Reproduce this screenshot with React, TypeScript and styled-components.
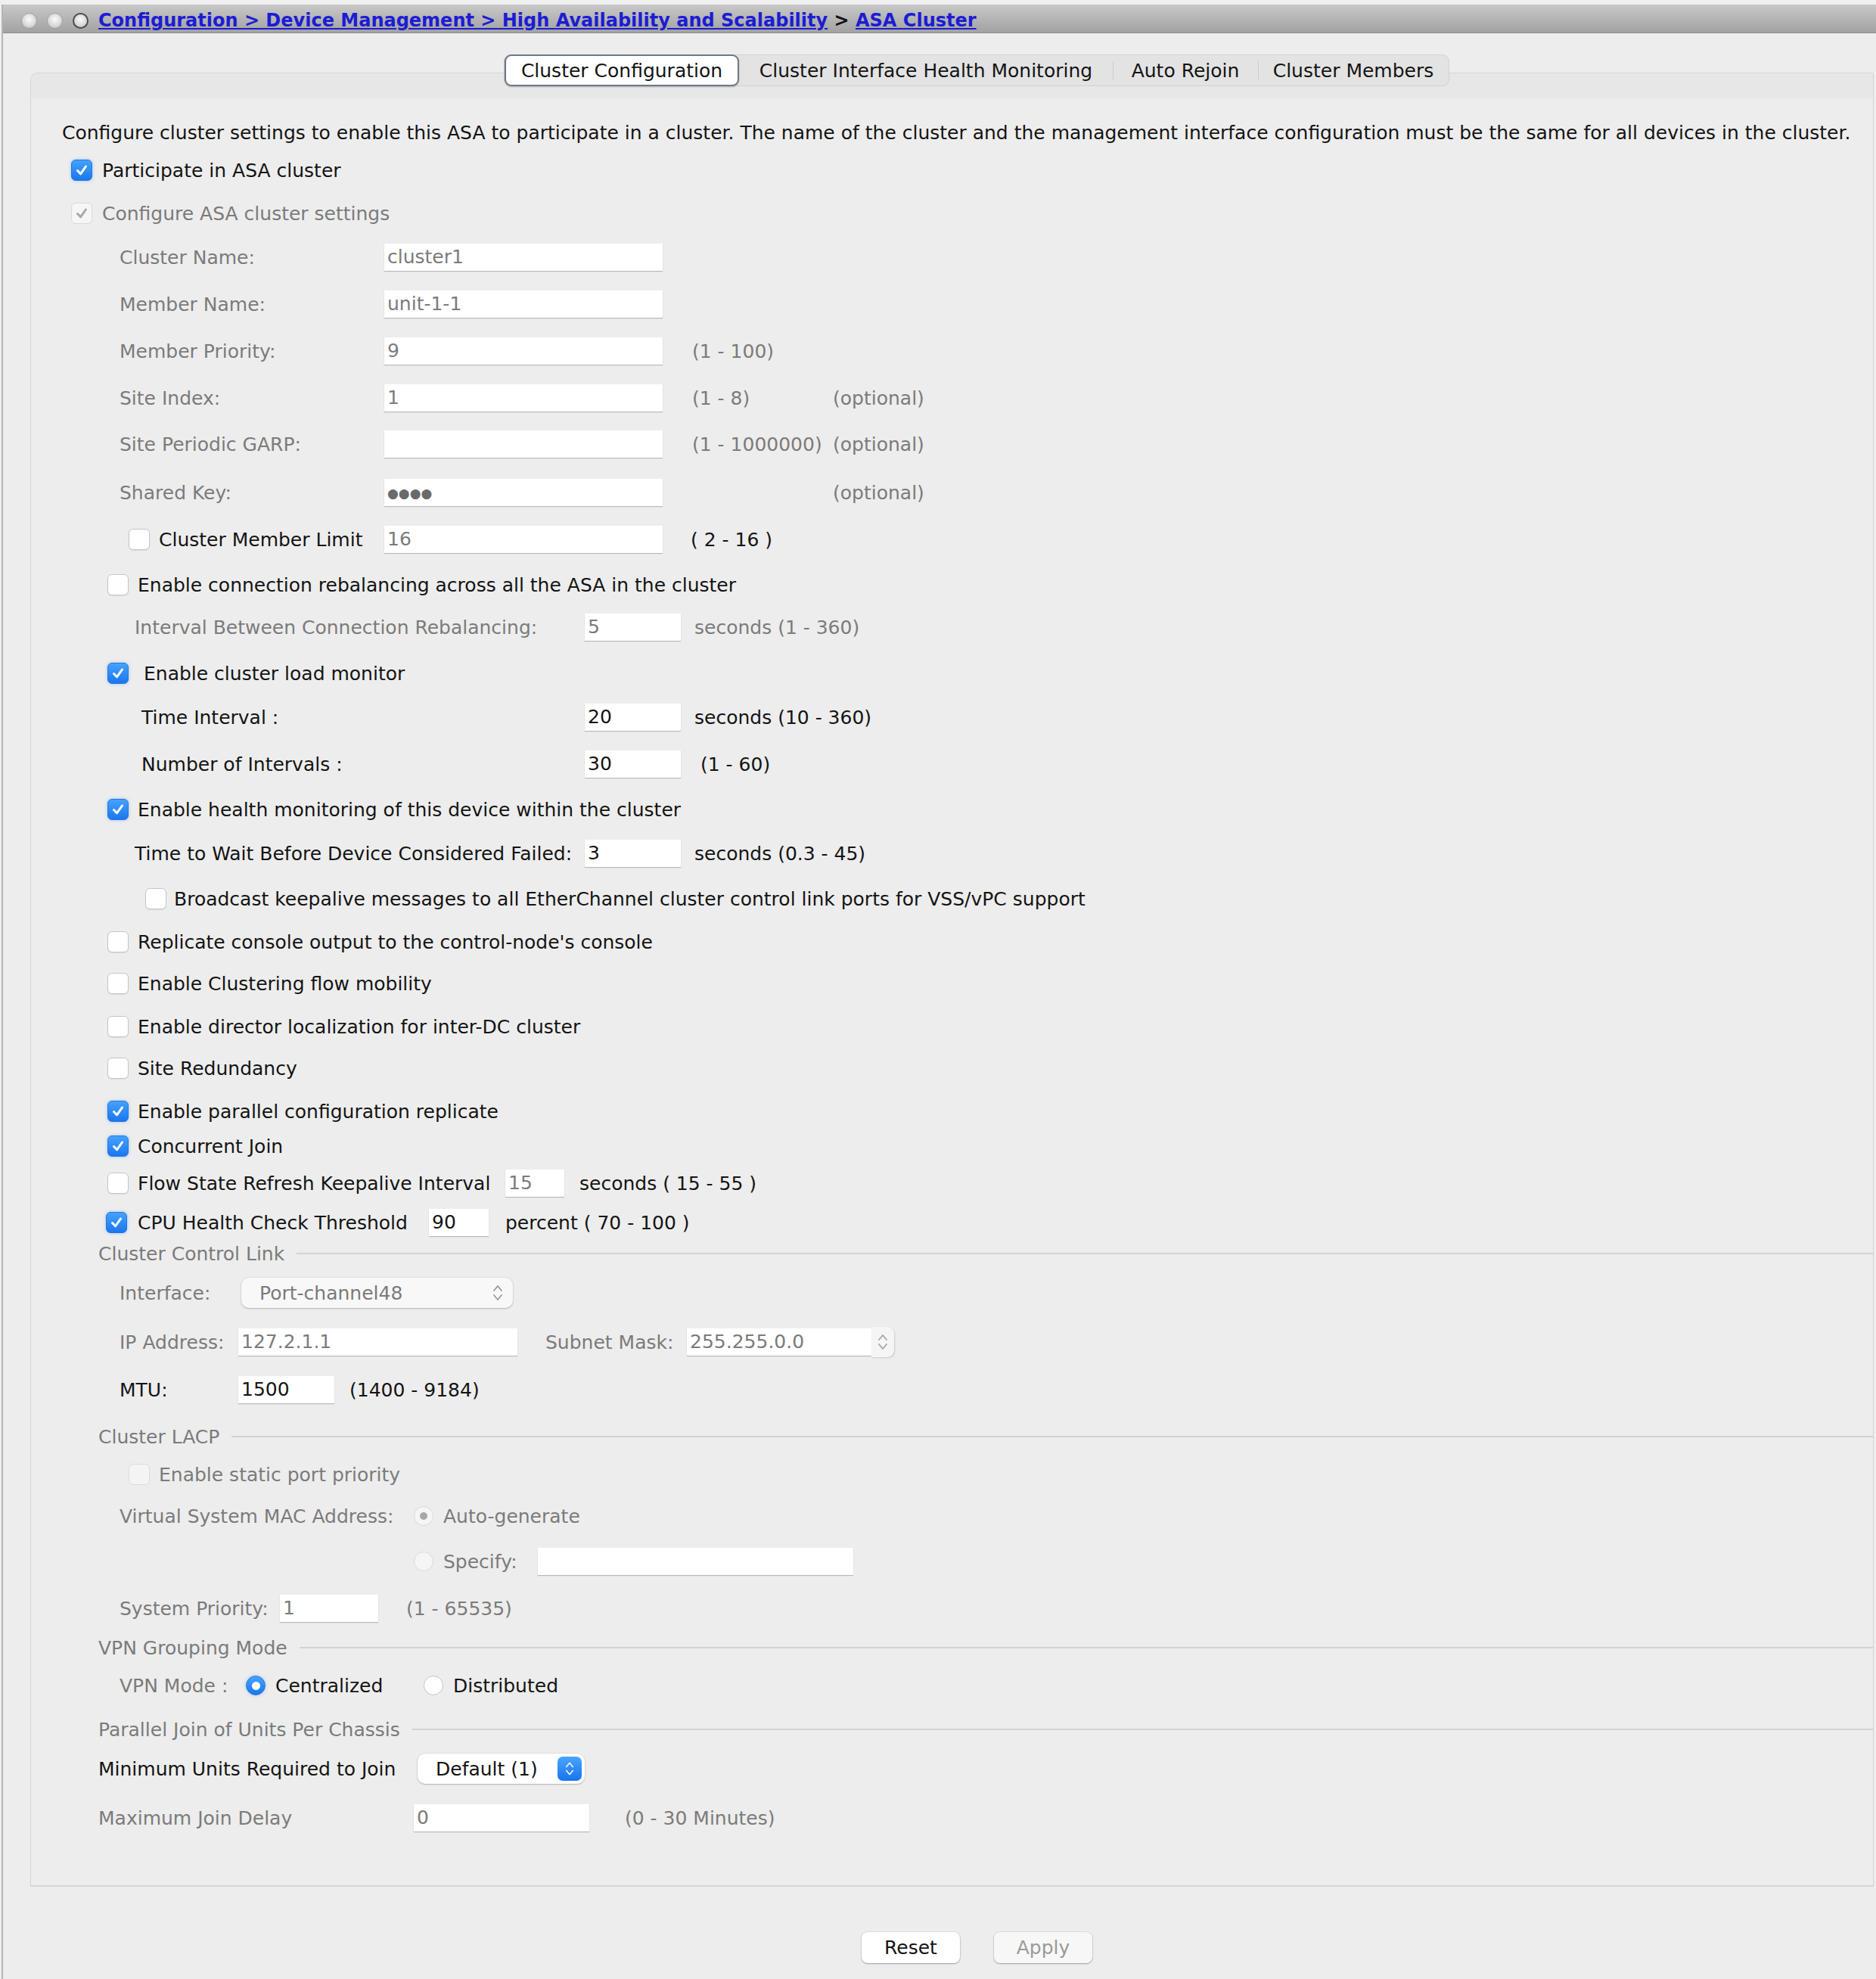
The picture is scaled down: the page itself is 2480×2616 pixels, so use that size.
import React from 'react';
import styled, { createGlobalStyle, css } from 'styled-components';

const GREY = '#7b7b7b';
const INK = '#141414';

const GlobalStyle = createGlobalStyle`
  html, body { margin: 0; padding: 0; }
  body {
    background: #f0f0f0;
    font-family: "DejaVu Sans", "Liberation Sans", sans-serif;
    font-size: 25px;
    color: ${INK};
  }
`;

const Page = styled.div`
  width: 2480px;
  height: 2616px;
  box-sizing: border-box;
  padding-top: 6px;
  display: flex;
  flex-direction: column;
`;

const Window = styled.div`
  flex: 1;
  margin-left: 2px;
  border-left: 2px solid #b4b4b4;
  background: #ededed;
  display: flex;
  flex-direction: column;
`;

const TitleBar = styled.div`
  height: 38px;
  box-sizing: border-box;
  flex-shrink: 0;
  display: flex;
  align-items: center;
  padding: 5px 0 0 24px;
  background: linear-gradient(#c8c8c8, #a2a2a2);
  border-bottom: 1px solid #8f8f8f;
`;

const Light = styled.span<{ $ring?: boolean }>`
  width: 21px;
  height: 21px;
  border-radius: 50%;
  box-sizing: border-box;
  margin-right: 13px;
  flex-shrink: 0;
  background: radial-gradient(circle at 50% 40%, #fbfbfb 0%, #dadada 55%, #b8b8b8 100%);
  border: ${p => (p.$ring ? '2px solid #4d4d4d' : '1px solid #a0a0a0')};
`;

const Crumbs = styled.div`
  font-weight: bold;
  font-size: 24px;
  color: #111;
  white-space: nowrap;
`;

const Crumb = styled.span`
  color: #1c1cd4;
  text-decoration: underline;
`;

const Body = styled.div`
  flex: 1;
  display: flex;
  flex-direction: column;
  padding: 52px 0 0 36px;
`;

const Panel = styled.section`
  border: 1px solid #d4d4d4;
  border-bottom: 2px solid #d6d6d6;
  border-top-left-radius: 10px;
  border-top-right-radius: 4px;
  margin-right: 3px;
  display: flex;
  flex-direction: column;
`;

const TabStrip = styled.div`
  height: 33px;
  background: #e7e7e7;
  border-top-left-radius: 10px;
  border-top-right-radius: 4px;
  display: flex;
`;

const TabBar = styled.div`
  display: flex;
  height: 42px;
  margin: -25px 0 0 625px;
  box-sizing: border-box;
  background: #e3e3e3;
  border: 1px solid #d2d2d2;
  border-radius: 9px;
`;

const Tab = styled.div<{ $w: number; $active?: boolean; $sep?: boolean }>`
  width: ${p => p.$w}px;
  position: relative;
  display: flex;
  align-items: center;
  justify-content: center;
  box-sizing: border-box;
  white-space: nowrap;
  ${p =>
    p.$active &&
    css`
      background: #fff;
      border: 2px solid #6e7986;
      border-radius: 9px;
      margin: -1px 0;
      box-shadow: 0 1px 2px rgba(0, 0, 0, 0.25);
    `}
  ${p =>
    p.$sep &&
    css`
      &::before {
        content: '';
        position: absolute;
        left: 0;
        top: 8px;
        bottom: 8px;
        width: 1px;
        background: #cdcdcd;
      }
    `}
`;

const Content = styled.div`
  display: flex;
  flex-direction: column;
  padding: 25px 0 69px 41px;
`;

const Row = styled.div<{ $gap?: number; $indent?: number }>`
  height: 40px;
  flex-shrink: 0;
  display: flex;
  align-items: center;
  white-space: nowrap;
  margin-top: ${p => p.$gap ?? 0}px;
  padding-left: ${p => p.$indent ?? 0}px;
`;

const Text = styled.span<{ $dim?: boolean; $w?: number; $ml?: number }>`
  color: ${p => (p.$dim ? GREY : INK)};
  margin-left: ${p => p.$ml ?? 0}px;
  ${p =>
    p.$w !== undefined &&
    css`
      width: ${p.$w}px;
      flex-shrink: 0;
    `}
`;

const Field = styled.div<{ $w: number; $dim?: boolean; $ml?: number }>`
  width: ${p => p.$w}px;
  height: 36px;
  line-height: 36px;
  flex-shrink: 0;
  box-sizing: border-box;
  padding-left: 4px;
  margin-left: ${p => p.$ml ?? 0}px;
  background: #fff;
  box-shadow: 0 1px 1px rgba(0, 0, 0, 0.22);
  color: ${p => (p.$dim ? GREY : INK)};
`;

const Dots = styled.span`
  color: #6a6a6a;
  letter-spacing: 0;
  font-size: 17px;
  vertical-align: 1px;
`;

type BoxState = 'on' | 'off' | 'dimOn' | 'dimOff';

const boxLook: Record<BoxState, ReturnType<typeof css>> = {
  on: css`
    background: linear-gradient(#45a2ff, #1a77ee);
    border: 1px solid #2a74d6;
    box-shadow: 0 0 4px rgba(90, 170, 255, 0.55);
  `,
  off: css`
    background: #fff;
    border: 1px solid #c6c6c6;
    box-shadow: 0 1px 1px rgba(0, 0, 0, 0.08);
  `,
  dimOn: css`
    background: #f6f6f6;
    border: 1px solid #d9d9d9;
  `,
  dimOff: css`
    background: #f4f4f4;
    border: 1px solid #dcdcdc;
  `,
};

const Box = styled.span<{ $state: BoxState; $mr: number }>`
  width: 28px;
  height: 28px;
  flex-shrink: 0;
  box-sizing: border-box;
  border-radius: 6px;
  margin-right: ${p => p.$mr}px;
  display: flex;
  align-items: center;
  justify-content: center;
  ${p => boxLook[p.$state]}
`;

const Check = ({ state, mr = 12 }: { state: BoxState; mr?: number }) => (
  <Box $state={state} $mr={mr}>
    {(state === 'on' || state === 'dimOn') && (
      <svg width="18" height="18" viewBox="0 0 18 18">
        <path
          d="M3.5 9.5 L7.5 13.8 L14.5 4"
          fill="none"
          stroke={state === 'on' ? '#fff' : '#a9a9a9'}
          strokeWidth="3"
          strokeLinecap="round"
          strokeLinejoin="round"
        />
      </svg>
    )}
  </Box>
);

type RadioState = 'on' | 'off' | 'dimOn' | 'dimOff';

const RadioRing = styled.span<{ $state: RadioState }>`
  width: 26px;
  height: 26px;
  border-radius: 50%;
  flex-shrink: 0;
  box-sizing: border-box;
  margin-right: 13px;
  display: flex;
  align-items: center;
  justify-content: center;
  ${p =>
    p.$state === 'on'
      ? css`
          background: linear-gradient(#46a3ff, #1a76ee);
          border: 1px solid #2a74d6;
          box-shadow: 0 0 4px rgba(90, 170, 255, 0.5);
        `
      : p.$state === 'off'
      ? css`
          background: #fff;
          border: 1px solid #c4c4c4;
        `
      : css`
          background: #f5f5f5;
          border: 1px solid #dadada;
        `}
`;

const RadioDot = styled.span<{ $dim?: boolean }>`
  width: ${p => (p.$dim ? 10 : 11)}px;
  height: ${p => (p.$dim ? 10 : 11)}px;
  border-radius: 50%;
  background: ${p => (p.$dim ? '#a8a8a8' : '#fff')};
`;

const Radio = ({ state }: { state: RadioState }) => (
  <RadioRing $state={state}>
    {state === 'on' && <RadioDot />}
    {state === 'dimOn' && <RadioDot $dim />}
  </RadioRing>
);

const Combo = styled.div<{ $w: number; $dim?: boolean; $pr?: number }>`
  width: ${p => p.$w}px;
  height: 40px;
  flex-shrink: 0;
  box-sizing: border-box;
  border-radius: 10px;
  padding: 0 ${p => p.$pr ?? 12}px 0 24px;
  display: flex;
  align-items: center;
  justify-content: space-between;
  background: ${p => (p.$dim ? '#f8f8f8' : '#fff')};
  box-shadow: 0 1px 2px rgba(0, 0, 0, 0.22), 0 0 0 1px rgba(0, 0, 0, 0.04);
  color: ${p => (p.$dim ? GREY : INK)};
`;

const BlueStep = styled.span`
  width: 32px;
  height: 32px;
  border-radius: 7px;
  background: linear-gradient(#4aa6ff, #1873ec);
  display: flex;
  align-items: center;
  justify-content: center;
`;

const Spinner = styled.span`
  width: 30px;
  height: 40px;
  flex-shrink: 0;
  border-radius: 0 9px 9px 0;
  background: #f5f5f5;
  box-shadow: 1px 1px 2px rgba(0, 0, 0, 0.15);
  display: flex;
  align-items: center;
  justify-content: center;
`;

const Chevrons = ({ color, h = 26 }: { color: string; h?: number }) => (
  <svg width="16" height={h} viewBox="0 0 16 26">
    <path d="M3 10 L8 4 L13 10" fill="none" stroke={color} strokeWidth="1.8" strokeLinecap="round" strokeLinejoin="round" />
    <path d="M3 16 L8 22 L13 16" fill="none" stroke={color} strokeWidth="1.8" strokeLinecap="round" strokeLinejoin="round" />
  </svg>
);

const Section = styled.div<{ $gap: number }>`
  height: 40px;
  flex-shrink: 0;
  display: flex;
  align-items: center;
  margin-top: ${p => p.$gap}px;
  padding-left: 48px;
  color: ${GREY};
  white-space: nowrap;
`;

const Rule = styled.div`
  flex: 1;
  height: 2px;
  margin: 0 0 0 16px;
  background: #d3d3d3;
`;

const ButtonRow = styled.div`
  display: flex;
  gap: 45px;
  margin: 60px 0 0 1099px;
`;

const Button = styled.div<{ $disabled?: boolean }>`
  width: 130px;
  height: 41px;
  border-radius: 8px;
  display: flex;
  align-items: center;
  justify-content: center;
  background: ${p => (p.$disabled ? '#f7f7f7' : '#fff')};
  color: ${p => (p.$disabled ? '#9a9a9a' : INK)};
  box-shadow: 0 1px 2px rgba(0, 0, 0, 0.3), 0 0 0 1px rgba(0, 0, 0, 0.05);
`;

export default function App() {
  return (
    <Page>
      <GlobalStyle />
      <Window>
        <TitleBar>
          <Light />
          <Light />
          <Light $ring />
          <Crumbs>
            <Crumb>Configuration &gt; Device Management &gt; High Availability and Scalability</Crumb>
            {' > '}
            <Crumb>ASA Cluster</Crumb>
          </Crumbs>
        </TitleBar>

        <Body>
          <Panel>
            <TabStrip>
              <TabBar>
                <Tab $w={310} $active>Cluster Configuration</Tab>
                <Tab $w={494}>Cluster Interface Health Monitoring</Tab>
                <Tab $w={192} $sep>Auto Rejoin</Tab>
                <Tab $w={252} $sep>Cluster Members</Tab>
              </TabBar>
            </TabStrip>

            <Content>
              <Row>
                <Text>
                  Configure cluster settings to enable this ASA to participate in a cluster. The name of the cluster and the
                  management interface configuration must be the same for all devices in the cluster.
                </Text>
              </Row>
              <Row $gap={10} $indent={12}>
                <Check state="on" mr={13} />
                <Text>Participate in ASA cluster</Text>
              </Row>
              <Row $gap={17} $indent={12}>
                <Check state="dimOn" mr={13} />
                <Text $dim>Configure ASA cluster settings</Text>
              </Row>

              <Row $gap={18} $indent={76}>
                <Text $dim $w={350}>Cluster Name:</Text>
                <Field $w={368} $dim>cluster1</Field>
              </Row>
              <Row $gap={22} $indent={76}>
                <Text $dim $w={350}>Member Name:</Text>
                <Field $w={368} $dim>unit-1-1</Field>
              </Row>
              <Row $gap={22} $indent={76}>
                <Text $dim $w={350}>Member Priority:</Text>
                <Field $w={368} $dim>9</Field>
                <Text $dim $ml={39}>(1 - 100)</Text>
              </Row>
              <Row $gap={22} $indent={76}>
                <Text $dim $w={350}>Site Index:</Text>
                <Field $w={368} $dim>1</Field>
                <Text $dim $ml={39} $w={186}>(1 - 8)</Text>
                <Text $dim>(optional)</Text>
              </Row>
              <Row $gap={21} $indent={76}>
                <Text $dim $w={350}>Site Periodic GARP:</Text>
                <Field $w={368} $dim />
                <Text $dim $ml={39} $w={186}>(1 - 1000000)</Text>
                <Text $dim>(optional)</Text>
              </Row>
              <Row $gap={24} $indent={76}>
                <Text $dim $w={350}>Shared Key:</Text>
                <Field $w={368}>
                  <Dots>●●●●</Dots>
                </Field>
                <Text $dim $ml={225}>(optional)</Text>
              </Row>
              <Row $gap={22} $indent={88}>
                <Check state="off" />
                <Text $w={298}>Cluster Member Limit</Text>
                <Field $w={368} $dim>16</Field>
                <Text $ml={37}>( 2 - 16 )</Text>
              </Row>

              <Row $gap={20} $indent={60}>
                <Check state="off" />
                <Text>Enable connection rebalancing across all the ASA in the cluster</Text>
              </Row>
              <Row $gap={16} $indent={96}>
                <Text $dim $w={595}>Interval Between Connection Rebalancing:</Text>
                <Field $w={127} $dim>5</Field>
                <Text $dim $ml={18}>seconds (1 - 360)</Text>
              </Row>
              <Row $gap={21} $indent={60}>
                <Check state="on" mr={20} />
                <Text>Enable cluster load monitor</Text>
              </Row>
              <Row $gap={18} $indent={105}>
                <Text $w={586}>Time Interval :</Text>
                <Field $w={127}>20</Field>
                <Text $ml={18}>seconds (10 - 360)</Text>
              </Row>
              <Row $gap={22} $indent={105}>
                <Text $w={586}>Number of Intervals :</Text>
                <Field $w={127}>30</Field>
                <Text $ml={26}>(1 - 60)</Text>
              </Row>
              <Row $gap={20} $indent={60}>
                <Check state="on" />
                <Text>Enable health monitoring of this device within the cluster</Text>
              </Row>
              <Row $gap={18} $indent={96}>
                <Text $w={595}>Time to Wait Before Device Considered Failed:</Text>
                <Field $w={127}>3</Field>
                <Text $ml={18}>seconds (0.3 - 45)</Text>
              </Row>
              <Row $gap={20} $indent={110}>
                <Check state="off" mr={10} />
                <Text>Broadcast keepalive messages to all EtherChannel cluster control link ports for VSS/vPC support</Text>
              </Row>
              <Row $gap={17} $indent={60}>
                <Check state="off" />
                <Text>Replicate console output to the control-node's console</Text>
              </Row>
              <Row $gap={15} $indent={60}>
                <Check state="off" />
                <Text>Enable Clustering flow mobility</Text>
              </Row>
              <Row $gap={17} $indent={60}>
                <Check state="off" />
                <Text>Enable director localization for inter-DC cluster</Text>
              </Row>
              <Row $gap={15} $indent={60}>
                <Check state="off" />
                <Text>Site Redundancy</Text>
              </Row>
              <Row $gap={17} $indent={60}>
                <Check state="on" />
                <Text>Enable parallel configuration replicate</Text>
              </Row>
              <Row $gap={6} $indent={60}>
                <Check state="on" />
                <Text>Concurrent Join</Text>
              </Row>
              <Row $gap={9} $indent={60}>
                <Check state="off" />
                <Text $w={486}>Flow State Refresh Keepalive Interval</Text>
                <Field $w={78} $dim>15</Field>
                <Text $ml={20}>seconds ( 15 - 55 )</Text>
              </Row>
              <Row $gap={12} $indent={58}>
                <Check state="on" mr={14} />
                <Text $w={385}>CPU Health Check Threshold</Text>
                <Field $w={79}>90</Field>
                <Text $ml={22}>percent ( 70 - 100 )</Text>
              </Row>

              <Section $gap={1}>
                Cluster Control Link
                <Rule />
              </Section>
              <Row $gap={12} $indent={76}>
                <Text $dim $w={161}>Interface:</Text>
                <Combo $w={359} $dim>
                  Port-channel48
                  <Chevrons color="#9a9a9a" />
                </Combo>
              </Row>
              <Row $gap={25} $indent={76}>
                <Text $dim $w={157}>IP Address:</Text>
                <Field $w={369} $dim>127.2.1.1</Field>
                <Text $dim $ml={37} $w={187}>Subnet Mask:</Text>
                <Field $w={244} $dim>255.255.0.0</Field>
                <Spinner>
                  <Chevrons color="#a6a6a6" />
                </Spinner>
              </Row>
              <Row $gap={23} $indent={76}>
                <Text $w={157}>MTU:</Text>
                <Field $w={127}>1500</Field>
                <Text $ml={20}>(1400 - 9184)</Text>
              </Row>

              <Section $gap={22}>
                Cluster LACP
                <Rule />
              </Section>
              <Row $gap={10} $indent={88}>
                <Check state="dimOff" />
                <Text $dim>Enable static port priority</Text>
              </Row>
              <Row $gap={15} $indent={76}>
                <Text $dim $w={389}>Virtual System MAC Address:</Text>
                <Radio state="dimOn" />
                <Text $dim>Auto-generate</Text>
              </Row>
              <Row $gap={20} $indent={465}>
                <Radio state="dimOff" />
                <Text $dim $w={125}>Specify:</Text>
                <Field $w={417} />
              </Row>
              <Row $gap={22} $indent={76}>
                <Text $dim $w={212}>System Priority:</Text>
                <Field $w={130} $dim>1</Field>
                <Text $dim $ml={37}>(1 - 65535)</Text>
              </Row>

              <Section $gap={12}>
                VPN Grouping Mode
                <Rule />
              </Section>
              <Row $gap={10} $indent={76}>
                <Text $dim $w={167}>VPN Mode :</Text>
                <Radio state="on" />
                <Text $w={196}>Centralized</Text>
                <Radio state="off" />
                <Text>Distributed</Text>
              </Row>

              <Section $gap={18}>
                Parallel Join of Units Per Chassis
                <Rule />
              </Section>
              <Row $gap={12} $indent={48}>
                <Text $w={422}>Minimum Units Required to Join</Text>
                <Combo $w={221} $pr={4}>
                  Default (1)
                  <BlueStep>
                    <Chevrons color="#fff" h={22} />
                  </BlueStep>
                </Combo>
              </Row>
              <Row $gap={25} $indent={48}>
                <Text $dim $w={417}>Maximum Join Delay</Text>
                <Field $w={232} $dim>0</Field>
                <Text $dim $ml={47}>(0 - 30 Minutes)</Text>
              </Row>
            </Content>
          </Panel>

          <ButtonRow>
            <Button>Reset</Button>
            <Button $disabled>Apply</Button>
          </ButtonRow>
        </Body>
      </Window>
    </Page>
  );
}
